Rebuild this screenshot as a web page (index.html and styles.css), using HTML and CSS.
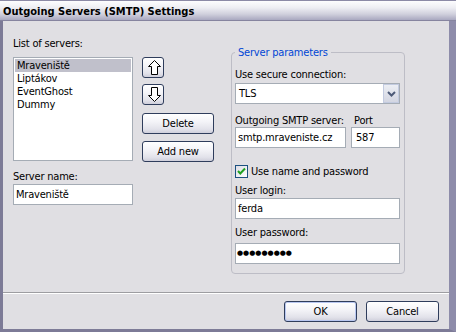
FILE: index.html
```html
<!DOCTYPE html>
<html>

<head>
    <meta charset="UTF-8">
    <title>Outgoing Servers (SMTP) Settings</title>
    <link rel="stylesheet" href="styles.css">
</head>

<body>
    <div class="window">
        <div class="titlebar">Outgoing Servers (SMTP) Settings</div>

        <div class="frame">
            <div class="content">

                <!-- left part: list of servers -->
                <div class="servers">
                    <div class="label">List of servers:</div>
                    <div class="servers-row">
                        <div class="listbox">
                            <div class="item selected">Mraveniště</div>
                            <div class="item">Liptákov</div>
                            <div class="item">EventGhost</div>
                            <div class="item">Dummy</div>
                        </div>
                        <div class="list-buttons">
                            <button class="btn btn-arrow btn-up" type="button">
                                <svg width="13" height="15" viewBox="0 0 13 15">
                                    <path d="M6.5 0.5 L12.5 6.5 L9.5 6.5 L9.5 14.5 L3.5 14.5 L3.5 6.5 L0.5 6.5 Z" fill="#fff" stroke="#000" stroke-width="1"/>
                                </svg>
                            </button>
                            <button class="btn btn-arrow btn-down" type="button">
                                <svg width="13" height="15" viewBox="0 0 13 15">
                                    <path d="M6.5 14.5 L12.5 8.5 L9.5 8.5 L9.5 0.5 L3.5 0.5 L3.5 8.5 L0.5 8.5 Z" fill="#fff" stroke="#000" stroke-width="1"/>
                                </svg>
                            </button>
                            <button class="btn btn-list btn-delete" type="button">Delete</button>
                            <button class="btn btn-list" type="button">Add new</button>
                        </div>
                    </div>
                    <div class="label label-name">Server name:</div>
                    <div class="textbox textbox-name">Mraveniště</div>
                </div>

                <!-- right part: parameters -->
                <fieldset class="params">
                    <legend>Server parameters</legend>

                    <div class="label">Use secure connection:</div>
                    <div class="select">
                        <span class="select-value">TLS</span>
                        <span class="select-drop">
                            <svg width="9" height="6" viewBox="0 0 9 6">
                                <path d="M1 1 L4.5 4.5 L8 1" fill="none" stroke="#4d5a78" stroke-width="2"/>
                            </svg>
                        </span>
                    </div>

                    <div class="server-port">
                        <div class="label">Outgoing SMTP server:</div>
                        <div class="label label-port">Port</div>
                        <div class="textbox">smtp.mraveniste.cz</div>
                        <div class="textbox textbox-port">587</div>
                    </div>

                    <div class="check-row">
                        <span class="checkbox">
                            <svg width="13" height="13" viewBox="0 0 13 13">
                                <defs>
                                    <linearGradient id="chk" x1="0" y1="0" x2="1" y2="1">
                                        <stop offset="0" stop-color="#dcdce4"/>
                                        <stop offset="1" stop-color="#ffffff"/>
                                    </linearGradient>
                                </defs>
                                <rect x="0.5" y="0.5" width="12" height="12" fill="url(#chk)" stroke="#1c5180"/>
                                <path d="M3 6 L5.3 8.5 L10 3.5" fill="none" stroke="#21a121" stroke-width="2"/>
                            </svg>
                        </span>
                        <span>Use name and password</span>
                    </div>

                    <div class="label label-login">User login:</div>
                    <div class="textbox">ferda</div>

                    <div class="label label-password">User password:</div>
                    <div class="textbox textbox-password">●●●●●●●●●</div>
                </fieldset>

            </div>

            <div class="footer">
                <button class="btn btn-dialog btn-default" type="button">OK</button>
                <button class="btn btn-dialog" type="button">Cancel</button>
            </div>
        </div>
    </div>
</body>

</html>
```

FILE: styles.css
```css
* {
    box-sizing: border-box;
}

html,
body {
    margin: 0;
}

body {
    width: 456px;
    height: 332px;
    overflow: hidden;
    background: #e0dfe3;
    font-family: "DejaVu Sans Condensed", "DejaVu Sans", sans-serif;
    font-size: 11px;
    letter-spacing: -0.2px;
    color: #000;
}

.window {
    height: 332px;
    display: flex;
    flex-direction: column;
}

.titlebar {
    height: 21px;
    padding: 3px 0 0 3px;
    border-top: 1px solid #8c8aa6;
    border-bottom: 1px solid #86849f;
    background: linear-gradient(#fdfdfe, #eeeef3 35%, #cfcfdc 70%, #a9a8c0);
    font-weight: bold;
    font-size: 11px;
    letter-spacing: 0;
    line-height: 16px;
}

.frame {
    flex: 1;
    display: flex;
    flex-direction: column;
    border-left: 3px solid #7d7b97;
    border-right: 7px solid #8e8caa;
    border-bottom: 3px solid #7d7b97;
}

.content {
    flex: 1;
    display: flex;
    padding-left: 10px;
}

.label {
    line-height: 13px;
    white-space: nowrap;
}

/* servers list */

.servers {
    padding-top: 16px;
    width: 218px;
}

.servers-row {
    display: flex;
    margin-top: 7px;
}

.listbox {
    width: 120px;
    height: 104px;
    padding: 1px;
    border: 1px solid #a5acb5;
    background: #fff;
}

.item {
    height: 13px;
    line-height: 13px;
    padding-left: 2px;
}

.item.selected {
    background: #c0c0cb;
}

.list-buttons {
    display: flex;
    flex-direction: column;
    align-items: flex-start;
    margin-left: 9px;
}

.btn {
    display: flex;
    align-items: center;
    justify-content: center;
    padding: 0;
    border: 1px solid #2f3d5c;
    border-radius: 3px;
    background: linear-gradient(#ffffff, #f4f4f8 40%, #e2e2ea 80%, #cfcfdb);
    font-family: inherit;
    font-size: 11px;
    letter-spacing: inherit;
    color: #000;
}

.btn-arrow {
    width: 22px;
    height: 21px;
    margin-bottom: 6px;
    padding-left: 2px;
}

.btn-down {
    margin-bottom: 8px;
}

.btn-list {
    width: 72px;
    height: 21px;
}

.btn-delete {
    margin-bottom: 7px;
}

.label-name {
    margin-top: 8px;
}

.textbox {
    height: 21px;
    padding-left: 2px;
    border: 1px solid #a5acb5;
    background: #fff;
    line-height: 19px;
    white-space: nowrap;
    overflow: hidden;
}

.textbox-name {
    width: 120px;
    margin-top: 1px;
}

/* parameters group */

.params {
    width: 174px;
    height: 228px;
    margin: 25px 0 0 0;
    padding: 9px 4px 0 3px;
    border: 1px solid #bdbdc6;
    border-radius: 4px;
}

.params legend {
    padding: 0 3px;
    line-height: 13px;
    color: #0046d5;
}

.select {
    display: flex;
    justify-content: space-between;
    height: 21px;
    margin-top: 2px;
    border: 1px solid #a5acb5;
    background: #fff;
}

.select-value {
    padding-left: 3px;
    line-height: 19px;
}

.select-drop {
    display: flex;
    align-items: center;
    justify-content: center;
    width: 16px;
    height: 19px;
    border: 1px solid #c3cbe0;
    background: linear-gradient(#eceef4, #d3d6e2);
}

.server-port {
    display: grid;
    grid-template-columns: 111px 49px;
    column-gap: 5px;
    margin-top: 10px;
}

.label-port {
    padding-left: 3px;
}

.textbox-port {
    padding-left: 4px;
}

.check-row {
    display: flex;
    align-items: center;
    gap: 3px;
    height: 13px;
    margin-top: 17px;
}

.checkbox {
    display: flex;
    width: 13px;
    height: 13px;
}

.label-login {
    margin-top: 6px;
    margin-bottom: 1px;
}

.label-password {
    margin-top: 7px;
    margin-bottom: 4px;
}

.textbox-password {
    padding-left: 1px;
    font-family: "DejaVu Sans", sans-serif;
    font-size: 7px;
    letter-spacing: 0;
}

/* dialog buttons */

.footer {
    display: flex;
    justify-content: flex-end;
    gap: 9px;
    height: 37px;
    padding: 8px 10px 0 0;
    border-top: 1px solid #9d9da1;
    box-shadow: inset 0 1px #fff;
}

.btn-dialog {
    width: 73px;
    height: 21px;
}

.btn-default {
    box-shadow: inset 0 0 0 1px #b9c7f0;
}
```
